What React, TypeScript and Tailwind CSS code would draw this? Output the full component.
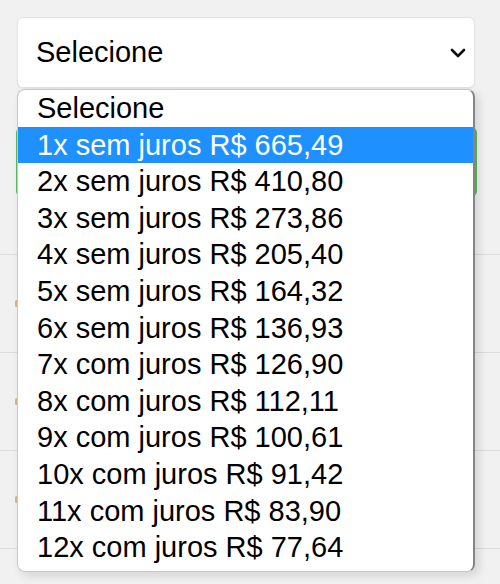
const options = [
  "1x sem juros R$ 665,49",
  "2x sem juros R$ 410,80",
  "3x sem juros R$ 273,86",
  "4x sem juros R$ 205,40",
  "5x sem juros R$ 164,32",
  "6x sem juros R$ 136,93",
  "7x com juros R$ 126,90",
  "8x com juros R$ 112,11",
  "9x com juros R$ 100,61",
  "10x com juros R$ 91,42",
  "11x com juros R$ 83,90",
  "12x com juros R$ 77,64",
];

function Chevron() {
  return (
    <svg viewBox="0 0 16 10" className="h-[10px] w-[16px]" fill="none" stroke="#111" strokeWidth={2.6} strokeLinecap="round" strokeLinejoin="round">
      <polyline points="2,2 8,8 14,2" />
    </svg>
  );
}

export default function App() {
  return (
    <div className="relative h-[584px] w-[500px] overflow-hidden bg-[#f1f1f1] font-['Liberation_Sans',Arial,sans-serif] text-black">
      <div className="pl-[17px] pt-[17px]">
        <div className="flex h-[71px] w-[458px] items-center justify-between rounded-md border border-[#e3e3e3] bg-white pl-[18px] pr-[8px] text-[29px] shadow-[0_1px_2px_rgba(0,0,0,0.06)]">
          <span>Selecione</span>
          <Chevron />
        </div>

        {/* content behind the open list */}
        <div className="-ml-[1px] mt-[39px] h-[70px] w-[461px] rounded-md bg-[#5cb85c]" />
      </div>
      <div className="mt-[57px] border-t border-[#dcdcdc]">
        {[0, 1, 2, 3].map((i) => (
          <div key={i} className="flex h-[98px] items-center border-b border-[#dcdcdc] pl-[15px]">
            <div className="h-[7px] w-[3px] rounded-sm bg-[#d9b48a]" />
          </div>
        ))}
      </div>

      {/* open dropdown list */}
      <div className="absolute left-[17px] top-[89px] w-[458px] overflow-hidden rounded-lg border border-[#c8c8c8] border-r-2 border-r-[#858585] bg-white pb-[5px] text-[29px] leading-[36.6px] shadow-[4px_4px_10px_rgba(0,0,0,0.12)]">
        <div className="h-[36.6px] pl-[19px]">Selecione</div>
        {options.map((o, i) => (
          <div key={o} className={i === 0 ? "h-[36.6px] bg-[#1e90ff] pl-[19px] text-white" : "h-[36.6px] pl-[19px]"}>
            {o}
          </div>
        ))}
      </div>
    </div>
  );
}
